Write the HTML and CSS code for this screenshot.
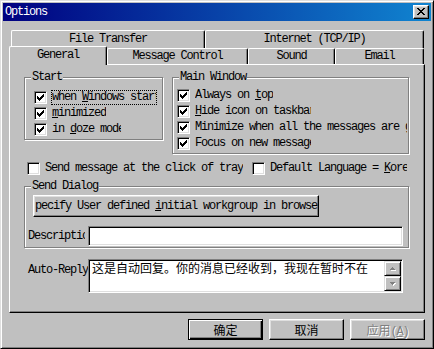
FILE: index.html
```html
<!DOCTYPE html>
<html lang="zh-CN">
<head>
    <meta charset="UTF-8">
    <meta name="viewport" content="width=device-width, initial-scale=1.0">
    <title>Options</title>
    <link rel="stylesheet" href="styles.css">
</head>
<body>
    <!-- shared glyphs -->
    <svg class="defs" width="0" height="0">
        <symbol id="chk" viewBox="0 0 7 7">
            <path d="M6 0h1v1h-1z M5 1h2v1h-2z M0 2h1v1h-1z M4 2h3v1h-3z M0 3h2v1h-2z M3 3h3v1h-3z M0 4h5v1h-5z M1 5h3v1h-3z M2 6h1v1h-1z"/>
        </symbol>
    </svg>

    <div class="window">
        <div class="titlebar">
            <span class="title">Options</span>
            <div class="close-btn">
                <svg width="8" height="7" viewBox="0 0 8 7"><path d="M0 0h2v1h-2z M6 0h2v1h-2z M1 1h2v1h-2z M5 1h2v1h-2z M2 2h4v1h-4z M3 3h2v1h-2z M2 4h4v1h-4z M1 5h2v1h-2z M5 5h2v1h-2z M0 6h2v1h-2z M6 6h2v1h-2z"/></svg>
            </div>
        </div>

        <div class="tabs">
            <div class="tab-row back">
                <div class="tab tab-ft">File Transfer</div>
                <div class="tab tab-inet">Internet (TCP/IP)</div>
            </div>
            <div class="tab-row front">
                <div class="tab tab-general selected">General</div>
                <div class="tab tab-msg">Message Control</div>
                <div class="tab tab-sound">Sound</div>
                <div class="tab tab-email">Email</div>
            </div>
        </div>

        <div class="panel">
            <div class="group-row">
                <div class="group group-start">
                    <span class="legend">Start</span>
                    <div class="checks">
                        <div class="check">
                            <span class="box"><svg width="7" height="7"><use href="#chk"/></svg></span>
                            <span class="label focus w-start">when <u>W</u>indows start</span>
                        </div>
                        <div class="check">
                            <span class="box"><svg width="7" height="7"><use href="#chk"/></svg></span>
                            <span class="label"><u>m</u>inimized</span>
                        </div>
                        <div class="check">
                            <span class="box"><svg width="7" height="7"><use href="#chk"/></svg></span>
                            <span class="label w-doze">in <u>d</u>oze mode</span>
                        </div>
                    </div>
                </div>

                <div class="group group-main">
                    <span class="legend">Main Window</span>
                    <div class="checks">
                        <div class="check">
                            <span class="box"><svg width="7" height="7"><use href="#chk"/></svg></span>
                            <span class="label">Always on <u>t</u>op</span>
                        </div>
                        <div class="check">
                            <span class="box"><svg width="7" height="7"><use href="#chk"/></svg></span>
                            <span class="label w-short"><u>H</u>ide icon on taskbar</span>
                        </div>
                        <div class="check">
                            <span class="box"><svg width="7" height="7"><use href="#chk"/></svg></span>
                            <span class="label w-long">Minimize when all the messages are gone</span>
                        </div>
                        <div class="check">
                            <span class="box"><svg width="7" height="7"><use href="#chk"/></svg></span>
                            <span class="label w-short">Focus on new message</span>
                        </div>
                    </div>
                </div>
            </div>

            <div class="check-row">
                <div class="check check-tray">
                    <span class="box"></span>
                    <span class="label">Send message at the click of tray</span>
                </div>
                <div class="check">
                    <span class="box"></span>
                    <span class="label w-lang">Default Language = <u>K</u>orean</span>
                </div>
            </div>

            <div class="group group-send">
                <span class="legend">Send Dialog</span>
                <div class="send-btn">pecify User defined <u>i</u>nitial workgroup in browse</div>
                <div class="desc-row">
                    <span class="desc-label">Description</span>
                    <div class="field"></div>
                </div>
            </div>

            <div class="reply-row">
                <span class="reply-label">Auto-Reply</span>
                <div class="reply-field">
                    <div class="reply-text">这是自动回复。你的消息已经收到，我现在暂时不在</div>
                    <div class="scrollbar">
                        <div class="sb-btn">
                            <svg width="6" height="4" viewBox="0 0 6 4"><path class="hl" d="M3 1h1v1h-1z M2 2h3v1h-3z M1 3h5v1h-5z"/><path class="sh" d="M2 0h1v1h-1z M1 1h3v1h-3z M0 2h5v1h-5z"/></svg>
                        </div>
                        <div class="sb-btn">
                            <svg width="6" height="4" viewBox="0 0 6 4"><path class="hl" d="M1 1h5v1h-5z M2 2h3v1h-3z M3 3h1v1h-1z"/><path class="sh" d="M0 0h5v1h-5z M1 1h3v1h-3z M2 2h1v1h-1z"/></svg>
                        </div>
                    </div>
                </div>
            </div>
        </div>

        <div class="buttons">
            <div class="btn default"><span class="cjk">确定</span></div>
            <div class="btn"><span class="cjk">取消</span></div>
            <div class="btn disabled"><span class="cjk">应用</span>(<u>A</u>)</div>
        </div>
    </div>
</body>
</html>
```

FILE: styles.css
```css
/* General styles */
* {
    box-sizing: border-box;
}
body {
    margin: 0;
    background-color: #c0c0c0;
    font-family: "Liberation Mono", "Noto Sans CJK SC", monospace;
    font-size: 12px;
    letter-spacing: -1.2px;
    color: #000;
}
.defs {
    display: block;
    height: 0;
}
.cjk {
    font-family: "Noto Sans CJK SC", sans-serif;
    font-size: 12px;
    letter-spacing: 0;
}

/* Window frame */
.window {
    width: 434px;
    height: 349px;
    padding: 2px;
    background-color: #c0c0c0;
    border: 1px solid;
    border-color: #dfdfdf #000 #000 #dfdfdf;
    box-shadow: inset 1px 1px #fff, inset -1px -1px #808080;
}
.titlebar {
    height: 18px;
    padding: 0 2px;
    display: flex;
    justify-content: space-between;
    align-items: center;
    background: linear-gradient(to right, #000080, #1084d0);
    color: #fff;
}
.title {
    line-height: 12px;
}
.close-btn {
    width: 16px;
    height: 14px;
    padding: 2px 0 0 3px;
    background-color: #c0c0c0;
    border: 1px solid;
    border-color: #fff #000 #000 #fff;
    box-shadow: inset -1px -1px #808080, inset 1px 1px #dfdfdf;
}
.close-btn svg {
    display: block;
}

/* Tabs */
.tabs {
    margin: 9px 0 0 6px;
    width: 416px;
}
.tab-row {
    display: flex;
    align-items: flex-start;
}
.tab-row.back {
    height: 18px;
    padding-left: 2px;
}
.tab-row.front {
    height: 16px;
}
.tab {
    background-color: #c0c0c0;
    border: 1px solid;
    border-bottom: 0;
    border-color: #fff #000 #000 #fff;
    border-radius: 2px 2px 0 0;
    box-shadow: inset -1px 0 #808080;
    text-align: center;
    white-space: nowrap;
}
.back .tab {
    height: 18px;
    line-height: 17px;
}
.front .tab {
    height: 16px;
    line-height: 15px;
}
.front .tab.selected {
    height: 19px;
    margin-top: -2px;
    line-height: 17px;
    position: relative;
    z-index: 1;
}
.tab-ft { width: 194px; }
.tab-inet { width: 219px; }
.tab-general { width: 98px; }
.tab-msg { width: 141px; }
.tab-sound { width: 87px; }
.tab-email { width: 89px; }

/* Page panel */
.panel {
    width: 416px;
    height: 249px;
    margin-left: 6px;
    padding: 12px 0 0 14px;
    border: 1px solid;
    border-color: #fff #000 #000 #fff;
    box-shadow: inset -1px -1px #808080;
}
.group-row {
    display: flex;
    align-items: flex-start;
    gap: 9px;
}
.group {
    border: 1px solid #808080;
    box-shadow: 1px 1px 0 #fff, inset 1px 1px 0 #fff;
}
.legend {
    display: block;
    width: max-content;
    height: 12px;
    margin: -7px 0 0 6px;
    padding: 0 1px;
    line-height: 12px;
    background-color: #c0c0c0;
}
.group-start {
    width: 139px;
    height: 63px;
}
.group-start .checks {
    margin: 7px 0 0 9px;
}
.group-main {
    width: 237px;
    height: 77px;
}
.group-main .checks {
    margin: 5px 0 0 4px;
}
.checks {
    display: flex;
    flex-direction: column;
    gap: 1px;
}

/* Check boxes */
.check {
    display: flex;
    align-items: center;
    height: 15px;
}
.box {
    flex: none;
    width: 13px;
    height: 13px;
    display: flex;
    align-items: center;
    justify-content: center;
    background-color: #fff;
    border: 1px solid;
    border-color: #808080 #fff #fff #808080;
    box-shadow: inset 1px 1px #000, inset -1px -1px #dfdfdf;
}
.box svg {
    display: block;
}
.label {
    margin-left: 4px;
    height: 15px;
    line-height: 13px;
    border: 1px solid transparent;
    white-space: nowrap;
    overflow: hidden;
}
.label.focus {
    border: 1px dotted #000;
}
.w-start { width: 106px; }
.w-doze { width: 71px; }
.w-short { width: 118px; }
.w-long { width: 214px; }
.w-lang { width: 139px; }

.check-row {
    display: flex;
    margin: 7px 0 0 3px;
}
.check-tray {
    width: 225px;
}

/* Send dialog group */
.group-send {
    width: 385px;
    margin-top: 10px;
    padding-bottom: 1px;
}
.send-btn {
    width: 286px;
    height: 22px;
    margin: 3px 0 0 8px;
    padding-left: 1px;
    line-height: 20px;
    white-space: nowrap;
    overflow: hidden;
    border: 1px solid;
    border-color: #fff #000 #000 #fff;
    box-shadow: inset -1px -1px #808080, inset 1px 1px #dfdfdf;
}
.desc-row {
    display: flex;
    align-items: center;
    margin: 9px 0 0 3px;
}
.desc-label {
    width: 57px;
    margin-right: 3px;
    line-height: 12px;
    white-space: nowrap;
    overflow: hidden;
}
.field {
    width: 315px;
    height: 20px;
    background-color: #fff;
    border: 1px solid;
    border-color: #808080 #fff #fff #808080;
    box-shadow: inset 1px 1px #000, inset -1px -1px #dfdfdf;
}

/* Auto reply */
.reply-row {
    display: flex;
    margin-top: 11px;
}
.reply-label {
    width: 60px;
    margin: 5px 0 0 4px;
    line-height: 12px;
}
.reply-field {
    width: 315px;
    height: 34px;
    padding: 1px;
    display: flex;
    background-color: #fff;
    border: 1px solid;
    border-color: #808080 #fff #fff #808080;
    box-shadow: inset 1px 1px #000, inset -1px -1px #dfdfdf;
}
.reply-text {
    flex: 1;
    padding: 1px 0 0 2px;
    font-family: "Noto Sans CJK SC", sans-serif;
    font-size: 12px;
    letter-spacing: 0;
    line-height: 12px;
    white-space: nowrap;
    overflow: hidden;
}
.scrollbar {
    width: 17px;
    display: flex;
    flex-direction: column;
}
.sb-btn {
    height: 15px;
    display: flex;
    align-items: center;
    justify-content: center;
    background-color: #c0c0c0;
    border: 1px solid;
    border-color: #dfdfdf #000 #000 #dfdfdf;
    box-shadow: inset 1px 1px #fff, inset -1px -1px #808080;
}
.sb-btn svg {
    display: block;
}
.sb-btn .hl { fill: #fff; }
.sb-btn .sh { fill: #808080; }

/* Dialog buttons */
.buttons {
    width: 416px;
    margin: 6px 0 0 6px;
    display: flex;
    justify-content: flex-end;
    gap: 6px;
}
.btn {
    width: 75px;
    height: 21px;
    line-height: 19px;
    text-align: center;
    border: 1px solid;
    border-color: #fff #000 #000 #fff;
    box-shadow: inset -1px -1px #808080, inset 1px 1px #dfdfdf;
}
.btn.default {
    border-color: #000;
    box-shadow: inset 1px 1px #fff, inset -1px -1px #000, inset -2px -2px #808080;
}
.btn.disabled {
    color: #808080;
    text-shadow: 1px 1px 0 #fff;
}
```
